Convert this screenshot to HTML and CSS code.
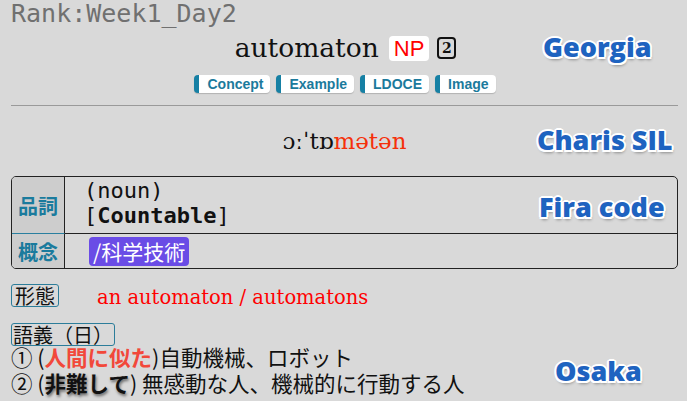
FILE: index.html
```html
<!DOCTYPE html>
<html lang="ja">
<head>
<meta charset="utf-8">
<link rel="stylesheet" href="styles.css">
</head>
<body>
<div class="card">
  <div class="rank">Rank:Week1_Day2</div>
  <div class="headword">
    <span class="word">automaton</span>
    <span class="np">NP</span>
    <span class="freq">2</span>
  </div>
  <div class="links">
    <span class="link">Concept</span>
    <span class="link">Example</span>
    <span class="link">LDOCE</span>
    <span class="link">Image</span>
  </div>
  <div class="rule"></div>
  <div class="ipa">ɔːˈtɒ<span class="ipa-red">mətən</span></div>
  <div class="info">
    <div class="th th-top">品詞</div>
    <div class="td td-top">
      <div>(noun)</div>
      <div>[<b>Countable</b>]</div>
    </div>
    <div class="th">概念</div>
    <div class="td td-bottom"><span class="tag">/科学技術</span></div>
  </div>
  <div class="forms">
    <span class="box">形態</span>
    <span class="forms-text">an automaton / automatons</span>
  </div>
  <div class="meaning-head"><span class="box box-wide">語義（日）</span></div>
  <div class="meanings">
    <div class="line">① (<span class="hl-red">人間に似た</span>)自動機械、ロボット</div>
    <div class="line">② (<span class="hl-bold">非難して</span>) 無感動な人、機械的に行動する人</div>
  </div>
  <span class="label label-georgia">Georgia</span>
  <span class="label label-charis">Charis SIL</span>
  <span class="label label-fira">Fira code</span>
  <span class="label label-osaka">Osaka</span>
</div>
</body>
</html>
```

FILE: styles.css
```css
html, body {
  margin: 0;
  padding: 0;
}
body {
  background: #d9d9d9;
  width: 687px;
  height: 401px;
  overflow: hidden;
}
.card {
  position: relative;
  height: 401px;
}
.rank {
  font-family: "DejaVu Sans Mono", monospace;
  font-size: 25px;
  line-height: 28px;
  height: 28px;
  color: #707070;
  padding-left: 11px;
}
.headword {
  margin-top: 3px;
  height: 34px;
  display: flex;
  justify-content: center;
  align-items: center;
  padding-left: 4px;
}
.word {
  font-family: "DejaVu Serif", serif;
  font-size: 26.5px;
  line-height: 34px;
  color: #111;
}
.np {
  margin-left: 10px;
  background: #fff;
  color: #f00;
  font-family: "Liberation Sans", sans-serif;
  font-size: 22px;
  line-height: 25px;
  height: 25px;
  padding: 0 5px;
  border-radius: 4px;
}
.freq {
  margin-left: 8px;
  box-sizing: border-box;
  width: 19px;
  height: 22px;
  border: 2px solid #111;
  border-radius: 4px;
  font-family: "DejaVu Serif", serif;
  font-weight: bold;
  font-size: 14px;
  line-height: 18px;
  text-align: center;
  color: #111;
}
.links {
  margin-top: 10px;
  height: 18px;
  display: flex;
  justify-content: center;
  gap: 6px;
  padding-left: 3px;
}
.link {
  background: #fff;
  border-left: 5px solid #1680a4;
  border-radius: 4px;
  padding: 0 7px 0 8px;
  font-family: "Liberation Sans", sans-serif;
  font-weight: bold;
  font-size: 14px;
  line-height: 18px;
  color: #1b7a9c;
  box-shadow: 0 1px 1px rgba(0, 0, 0, 0.18);
}
.rule {
  margin: 12px 9px 0 11px;
  border-top: 1px solid #9a9a9a;
}
.ipa {
  padding: 20px 0 20px 2px;
  font-family: "DejaVu Serif", serif;
  font-size: 23px;
  line-height: 30px;
  text-align: center;
  color: #111;
}
.ipa-red {
  color: #f5300a;
}
.info {
  margin: 0 9px 0 11px;
  display: grid;
  grid-template-columns: 53px 1fr;
  grid-template-rows: 57px 34px;
  border: 1px solid #222;
  border-radius: 5px;
  overflow: hidden;
}
.th {
  box-sizing: border-box;
  background: #cdcdcd;
  border-right: 1px solid #222;
  color: #1a7b9d;
  font-family: "Noto Sans CJK JP", sans-serif;
  font-weight: bold;
  font-size: 20px;
  display: flex;
  align-items: center;
  justify-content: center;
}
.th-top {
  border-bottom: 1px solid #2a7f9f;
}
.td {
  box-sizing: border-box;
  padding-left: 19px;
  font-family: "DejaVu Sans Mono", monospace;
  font-size: 22px;
  color: #111;
}
.td-top {
  border-bottom: 1px solid #222;
  padding-top: 1px;
  line-height: 25px;
}
.td-top b {
  font-weight: bold;
}
.td-bottom {
  display: flex;
  align-items: center;
}
.tag {
  margin-left: 5px;
  background: #6a4ce6;
  color: #fff;
  font-family: "Noto Sans CJK JP", sans-serif;
  font-size: 21px;
  line-height: 29px;
  height: 29px;
  padding: 0 4px;
  border-radius: 4px;
}
.forms {
  margin-top: 15px;
  padding-left: 11px;
  display: flex;
  align-items: baseline;
}
.box {
  display: inline-block;
  border: 1px solid #2c7d9a;
  border-radius: 3px;
  padding: 0 3px;
  font-family: "Noto Sans CJK JP", sans-serif;
  font-size: 20px;
  line-height: 21px;
  color: #111;
}
.box-wide {
  padding: 0 1px;
}
.forms-text {
  margin-left: 38px;
  font-family: "DejaVu Serif", serif;
  font-size: 19.5px;
  color: #f00;
}
.meaning-head {
  margin-top: 14px;
  padding-left: 11px;
  height: 23px;
}
.meanings {
  margin-top: -2px;
  padding-left: 11px;
  font-family: "Noto Sans CJK JP", sans-serif;
  font-size: 21.5px;
  color: #111;
}
.line {
  height: 26px;
  line-height: 26px;
  white-space: nowrap;
}
.hl-red {
  color: #f2483a;
  font-weight: bold;
}
.hl-bold {
  font-weight: bold;
  text-shadow: 1px 2px 3px rgba(0, 0, 0, 0.55);
}
.label {
  position: absolute;
  font-family: "Open Sans", sans-serif;
  font-weight: 800;
  font-size: 27px;
  line-height: 26px;
  color: #1e63c0;
  white-space: nowrap;
  text-shadow:
    2px 0 0 #fff, -2px 0 0 #fff, 0 2px 0 #fff, 0 -2px 0 #fff,
    1.5px 1.5px 0 #fff, -1.5px 1.5px 0 #fff, 1.5px -1.5px 0 #fff, -1.5px -1.5px 0 #fff,
    1px 3px 3px rgba(0, 0, 0, 0.35);
}
.label-georgia { left: 543px; top: 34px; }
.label-charis { left: 537px; top: 127px; }
.label-fira { left: 539px; top: 194px; }
.label-osaka { left: 555px; top: 358px; }
```
